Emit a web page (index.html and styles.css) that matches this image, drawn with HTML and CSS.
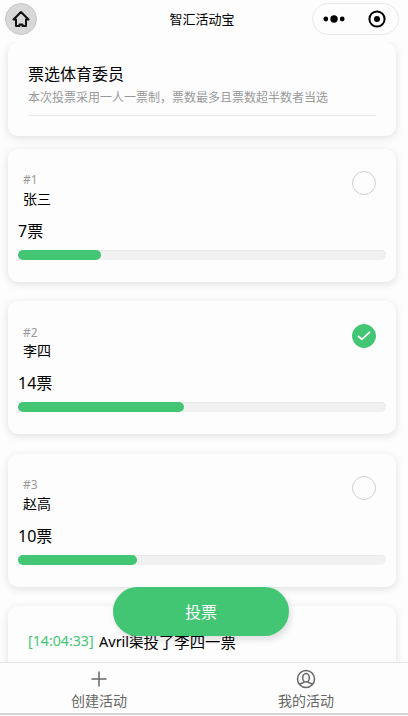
FILE: index.html
```html
<!DOCTYPE html>
<html lang="zh-CN">
<head>
<meta charset="utf-8">
<title>智汇活动宝</title>
<link rel="stylesheet" href="styles.css">
</head>
<body>
<div class="app">
  <header class="header">
    <span class="home"><svg width="20" height="18" viewBox="0 0 20 18" fill="none" stroke="#111" stroke-width="2" stroke-linejoin="round" stroke-linecap="round"><path d="M2.5 9.5 10 2 17.5 9.5H15V16H11.5V14.5H8.5V16H5V9.5Z"/></svg></span>
    <h1 class="title">智汇活动宝</h1>
    <span class="capsule">
      <svg width="22" height="8" viewBox="0 0 22 8"><circle cx="2.8" cy="4" r="2.4"/><circle cx="11" cy="4" r="3.7"/><circle cx="19.2" cy="4" r="2.4"/></svg>
      <svg width="18" height="18" viewBox="0 0 18 18"><circle cx="9" cy="9" r="7.6" fill="none" stroke="#000" stroke-width="2"/><circle cx="9" cy="9" r="3"/></svg>
    </span>
  </header>
  <main class="content">
    <section class="card intro">
      <h2 class="intro-title">票选体育委员</h2>
      <p class="intro-text">本次投票采用一人一票制，票数最多且票数超半数者当选</p>
    </section>
    <section class="card option">
      <div class="top"><div><p class="num">#1</p><p class="name">张三</p></div><span class="radio"></span></div>
      <p class="votes">7票</p>
      <div class="bar"><div class="fill" style="width:83px"></div></div>
    </section>
    <section class="card option">
      <div class="top"><div><p class="num">#2</p><p class="name">李四</p></div><span class="radio checked"><svg width="14" height="10" viewBox="0 0 14 10" fill="none" stroke="#fff" stroke-width="1.8"><path d="M1 5 4.8 8.4 13 .8"/></svg></span></div>
      <p class="votes">14票</p>
      <div class="bar"><div class="fill" style="width:166px"></div></div>
    </section>
    <section class="card option">
      <div class="top"><div><p class="num">#3</p><p class="name">赵高</p></div><span class="radio"></span></div>
      <p class="votes">10票</p>
      <div class="bar"><div class="fill" style="width:119px"></div></div>
    </section>
    <section class="card log"><span class="time">[14:04:33]</span><span class="who">Avril渠</span><span class="what">投了李四一票</span></section>
  </main>
  <button class="submit">投票</button>
  <nav class="tabs">
    <a class="tab"><svg width="20" height="20" viewBox="0 0 20 20" fill="none" stroke="#666" stroke-width="1.5"><path d="M10 2.5v15M2.5 10h15"/></svg>创建活动</a>
    <a class="tab"><svg width="20" height="20" viewBox="0 0 20 20" fill="none" stroke="#666" stroke-width="1.5"><circle cx="10" cy="10" r="8.5"/><ellipse cx="10" cy="8.7" rx="3.3" ry="4.3"/><path d="M3.5 15.3C5 14 7 14.3 8.3 12.7M16.5 15.3C15 14 13 14.3 11.7 12.7"/></svg>我的活动</a>
  </nav>
</div>
</body>
</html>
```
FILE: styles.css
```css
* { box-sizing: border-box; margin: 0; padding: 0; }
body {
  background: #fdfdfd;
  color: #000;
  font-family: "Noto Sans", "Noto Sans CJK SC", sans-serif;
  font-weight: 400;
}
.app { position: relative; height: 716px; overflow: hidden; display: flex; flex-direction: column; }
.header {
  height: 42px;
  flex: none;
  position: relative;
  z-index: 1;
  background: #fdfdfd;
  display: grid;
  grid-template-columns: 1fr auto 1fr;
  align-items: start;
  padding: 3px 9px 0 5px;
}
.home {
  width: 32px; height: 32px;
  border: 1px solid #c8c8c8;
  border-radius: 50%;
  background: #d8d8d8;
  display: flex; align-items: center; justify-content: center;
}
.title { font-size: 13px; font-weight: 400; line-height: 32px; }
.capsule {
  justify-self: end;
  width: 87px; height: 32px;
  border: 1px solid #e8e8e8;
  border-radius: 16px;
  display: flex; align-items: center; justify-content: space-between;
  padding: 0 12px 0 10px;
}
.content { height: 620px; flex: none; overflow: hidden; padding: 0 12px 0 8px; }
.card { border-radius: 10px; background: #fdfdfd; box-shadow: 0 2px 8px rgba(0, 0, 0, .12); }
.intro { height: 94px; padding: 20px 20px 0; margin-bottom: 13px; }
.intro-title { font-size: 16px; font-weight: 400; line-height: 24px; }
.intro-text { font-size: 12px; line-height: 24px; height: 30px; color: #999; border-bottom: 1px solid #e8e8e8; white-space: nowrap; }
.option { height: 132.8px; margin-bottom: 19.7px; padding: 22.3px 10px 0; }
.top { display: flex; justify-content: space-between; padding: 0 10px 0 5px; height: 47.6px; }
.num { font-size: 12px; line-height: 18px; height: 17.6px; color: #999; }
.name { font-size: 14px; line-height: 20px; }
.radio { width: 24px; height: 24px; border: 1px solid #d0d0d0; border-radius: 50%; display: flex; align-items: center; justify-content: center; }
.checked { background: #42c674; border-color: #42c674; }
.votes { font-size: 16px; line-height: 24px; height: 30.9px; }
.bar { height: 10px; border-radius: 5px; background: #f1f1f1; box-shadow: inset 0 1px 1px #e8e8e8; }
.fill { height: 10px; border-radius: 5px; background: #42c674; }
.log { height: 90px; padding: 23px 20px; display: flex; line-height: 24px; white-space: nowrap; }
.time { color: #42c674; width: 71px; font-size: 14.2px; }
.who { width: 44.5px; font-size: 14.5px; }
.what { font-size: 15.4px; padding-top: 1.5px; }
.submit {
  position: absolute; left: 113px; top: 587px;
  width: 176px; height: 49px;
  border: 0; border-radius: 25px;
  background: #42c674; color: #fff;
  font: 400 16px/51px "Noto Sans", "Noto Sans CJK SC", sans-serif;
  box-shadow: 2px 4px 6px rgba(0, 0, 0, .12);
}
.tabs { height: 54px; flex: none; display: flex; padding-right: 3px; position: relative; background: #fdfdfd; border-top: 1px solid #e4e4e4; }
.tabs::after { content: ""; position: absolute; left: 0; right: 0; bottom: 1px; height: 2px; background: #d4d4d4; }
.tab { flex: 1; padding: 6px 0 0; display: flex; flex-direction: column; align-items: center; font-size: 14px; line-height: 20px; color: #666; gap: 2px; }
.tab:first-child { padding-right: 9px; }
```
